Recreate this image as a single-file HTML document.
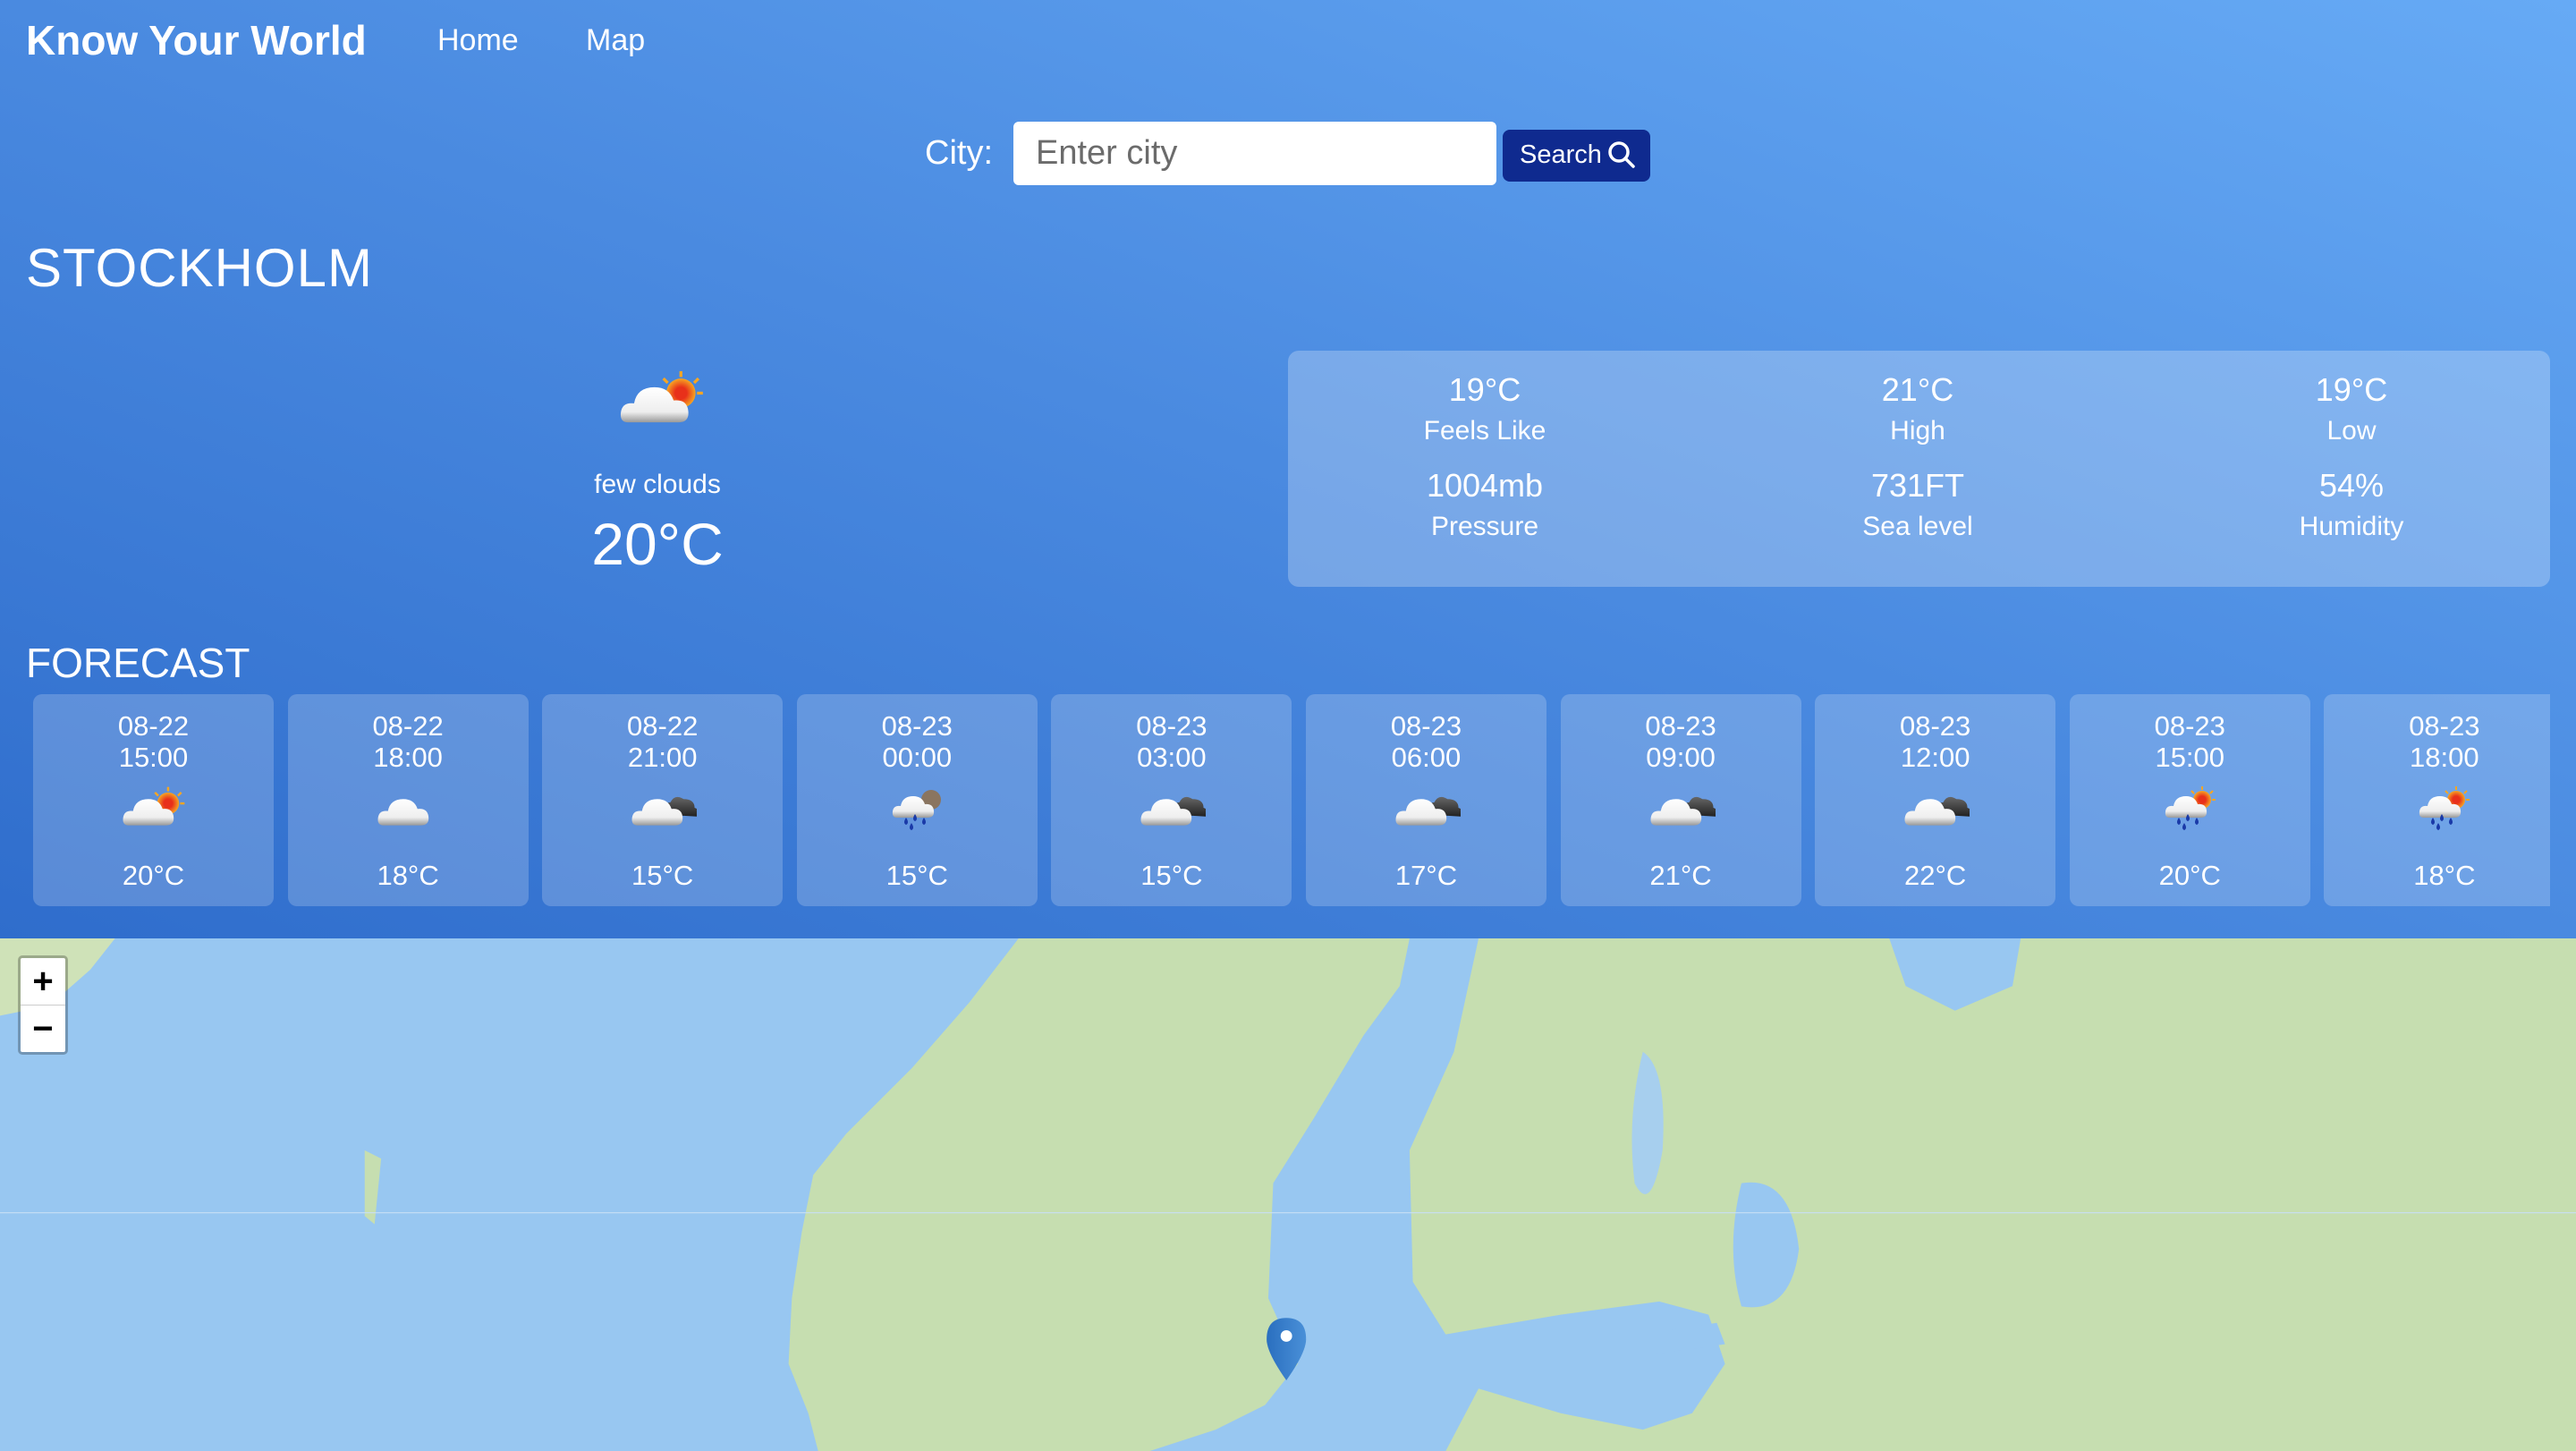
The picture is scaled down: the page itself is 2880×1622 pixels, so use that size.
<!DOCTYPE html>
<html><head><meta charset="utf-8"><style>
*{margin:0;padding:0;box-sizing:border-box}
body{width:2880px;height:1622px;overflow:hidden;font-family:"Liberation Sans",sans-serif;color:#fff;position:relative;background:#98c7f1}
.hdr{position:absolute;left:0;top:0;width:2880px;height:1049px;background:linear-gradient(to top right,#2f6dcc 0%,#4a8ae0 50%,#66aaf5 100%)}
.a{position:absolute;white-space:nowrap;line-height:1}
.c{transform:translateX(-50%);text-align:center}
.stats{position:absolute;left:1440px;top:392px;width:1411px;height:264px;background:rgba(255,255,255,0.25);border-radius:12px}
.cards{position:absolute;left:37px;top:776px;width:2814px;height:237px;overflow:hidden;display:flex;gap:15.6px}
.card{flex:0 0 269px;height:237px;background:rgba(255,255,255,0.2);border-radius:10px;position:relative;text-align:center}
.card .d{position:absolute;left:0;right:0;top:18px;font-size:31px;line-height:35px}
.card svg{position:absolute;left:97px;top:100px}
.card .t{position:absolute;left:0;right:0;top:185px;font-size:31px}
</style></head><body>
<svg width="0" height="0" style="position:absolute">
<defs>
<linearGradient id="cg" x1="0" y1="0" x2="0" y2="1"><stop offset="0" stop-color="#fff"/><stop offset="0.7" stop-color="#eee"/><stop offset="1" stop-color="#999"/></linearGradient>
<radialGradient id="sg"><stop offset="0.4" stop-color="#e8301a"/><stop offset="1" stop-color="#f6a623"/></radialGradient>
<linearGradient id="dg" x1="0" y1="0" x2="0" y2="1"><stop offset="0" stop-color="#666"/><stop offset="1" stop-color="#222"/></linearGradient>
<linearGradient id="pg" x1="0" y1="0" x2="1" y2="0"><stop offset="0" stop-color="#2a6fbf"/><stop offset="1" stop-color="#4a90d8"/></linearGradient>
<g id="cloud"><path d="M8 38 Q2 38 3 31 Q4 24 12 25 Q14 14 26 14 Q36 14 39 23 Q48 22 49 30 Q50 38 42 38 Z" fill="url(#cg)"/></g>
<g id="sun"><circle cx="44" cy="18" r="10" fill="url(#sg)"/><g stroke="#f6a623" stroke-width="2"><line x1="44" y1="3" x2="44" y2="7"/><line x1="56" y1="8" x2="53" y2="11"/><line x1="59" y1="18" x2="55" y2="18"/><line x1="32" y1="8" x2="35" y2="11"/></g></g>
<g id="dark"><path d="M30 28 Q28 18 38 17 Q42 9 50 14 Q60 14 60 22 Q66 24 62 30 Z" fill="url(#dg)"/></g>
<g id="moon"><circle cx="46" cy="18" r="11" fill="#8a7560"/></g>
<g id="rain" fill="#1a3aa8"><path d="M18 38 q-4 6 0 8 q4-2 0-8z"/><path d="M28 34 q-4 6 0 8 q4-2 0-8z"/><path d="M38 38 q-4 6 0 8 q4-2 0-8z"/><path d="M24 44 q-4 6 0 8 q4-2 0-8z"/></g>
</defs></svg>

<div class="hdr"></div>
<div class="a" style="left:29px;top:22px;font-size:46px;font-weight:bold">Know Your World</div>
<div class="a" style="left:489px;top:28px;font-size:34px">Home</div>
<div class="a" style="left:655px;top:28px;font-size:34px">Map</div>

<div class="a" style="left:1034px;top:152px;font-size:38px">City:</div>
<div style="position:absolute;left:1133px;top:136px;width:540px;height:71px;background:#fff;border-radius:6px"></div>
<div class="a" style="left:1158px;top:152px;font-size:38px;color:#6b6b6b">Enter city</div>
<div style="position:absolute;left:1680px;top:145px;width:165px;height:58px;background:#0f2a8f;border-radius:8px"></div>
<div class="a" style="left:1699px;top:159px;font-size:29px">Search</div>
<svg style="position:absolute;left:1797px;top:157px" width="32" height="32" viewBox="0 0 32 32"><circle cx="13" cy="13" r="10" fill="none" stroke="#fff" stroke-width="3.5"/><line x1="20" y1="20" x2="29" y2="29" stroke="#fff" stroke-width="3.5" stroke-linecap="round"/></svg>

<div class="a" style="left:29px;top:270px;font-size:60px;letter-spacing:1px">STOCKHOLM</div>

<svg style="position:absolute;left:685px;top:410px" width="110" height="72" viewBox="0 0 62 44"><use href="#sun"/><use href="#cloud"/></svg>
<div class="a c" style="left:735px;top:527px;font-size:30px">few clouds</div>
<div class="a c" style="left:735px;top:575px;font-size:66px">20°C</div>

<div class="stats"></div>
<div class="a c" style="left:1660px;top:418px;font-size:36px">19°C</div>
<div class="a c" style="left:1660px;top:467px;font-size:30px">Feels Like</div>
<div class="a c" style="left:1660px;top:525px;font-size:36px">1004mb</div>
<div class="a c" style="left:1660px;top:574px;font-size:30px">Pressure</div>
<div class="a c" style="left:2144px;top:418px;font-size:36px">21°C</div>
<div class="a c" style="left:2144px;top:467px;font-size:30px">High</div>
<div class="a c" style="left:2144px;top:525px;font-size:36px">731FT</div>
<div class="a c" style="left:2144px;top:574px;font-size:30px">Sea level</div>
<div class="a c" style="left:2629px;top:418px;font-size:36px">19°C</div>
<div class="a c" style="left:2629px;top:467px;font-size:30px">Low</div>
<div class="a c" style="left:2629px;top:525px;font-size:36px">54%</div>
<div class="a c" style="left:2629px;top:574px;font-size:30px">Humidity</div>

<div class="a" style="left:29px;top:718px;font-size:46px">FORECAST</div>

<div class="cards">
<div class="card"><div class="d">08-22<br>15:00</div><svg width="76" height="54" viewBox="0 0 62 44"><use href="#sun"/><use href="#cloud"/></svg><div class="t">20°C</div></div>
<div class="card"><div class="d">08-22<br>18:00</div><svg width="76" height="54" viewBox="0 0 62 44"><use href="#cloud"/></svg><div class="t">18°C</div></div>
<div class="card"><div class="d">08-22<br>21:00</div><svg width="76" height="54" viewBox="0 0 62 44"><use href="#dark"/><use href="#cloud"/></svg><div class="t">15°C</div></div>
<div class="card"><div class="d">08-23<br>00:00</div><svg width="76" height="54" viewBox="0 0 62 54"><use href="#moon"/><use href="#cloud"/><use href="#rain"/></svg><div class="t">15°C</div></div>
<div class="card"><div class="d">08-23<br>03:00</div><svg width="76" height="54" viewBox="0 0 62 44"><use href="#dark"/><use href="#cloud"/></svg><div class="t">15°C</div></div>
<div class="card"><div class="d">08-23<br>06:00</div><svg width="76" height="54" viewBox="0 0 62 44"><use href="#dark"/><use href="#cloud"/></svg><div class="t">17°C</div></div>
<div class="card"><div class="d">08-23<br>09:00</div><svg width="76" height="54" viewBox="0 0 62 44"><use href="#dark"/><use href="#cloud"/></svg><div class="t">21°C</div></div>
<div class="card"><div class="d">08-23<br>12:00</div><svg width="76" height="54" viewBox="0 0 62 44"><use href="#dark"/><use href="#cloud"/></svg><div class="t">22°C</div></div>
<div class="card"><div class="d">08-23<br>15:00</div><svg width="76" height="54" viewBox="0 0 62 54"><use href="#sun"/><use href="#cloud"/><use href="#rain"/></svg><div class="t">20°C</div></div>
<div class="card"><div class="d">08-23<br>18:00</div><svg width="76" height="54" viewBox="0 0 62 54"><use href="#sun"/><use href="#cloud"/><use href="#rain"/></svg><div class="t">18°C</div></div>
</div>

<svg style="position:absolute;left:0;top:1049px" width="2880" height="573" viewBox="0 571 1568 312" preserveAspectRatio="none">
<rect x="0" y="571" width="1568" height="312" fill="#98c7f1"/>
<path d="M0 571 L70 571 L55 590 L30 612 L0 618 Z" fill="#cfe2b8"/>
<path d="M620 571 L590 610 L555 650 L515 690 L495 715 L488 750 L482 790 L480 830 L492 860 L498 883 L700 883 L740 870 L770 855 L790 830 L772 790 L775 720 L800 680 L830 630 L852 600 L858 571 Z" fill="#c6deb0"/>
<path d="M900 571 L885 640 L858 700 L860 780 L880 812 L950 800 L1010 792 L1040 800 L1050 830 L1030 860 L1000 870 L950 860 L900 845 L880 883 L1568 883 L1568 571 Z" fill="#c6deb0"/>
<path d="M1150 571 L1230 571 L1225 600 L1190 615 L1160 600 Z" fill="#98c7f1"/>
<path d="M1060 720 Q1090 715 1095 760 Q1090 800 1060 795 Q1050 760 1060 720 Z" fill="#98c7f1"/>
<path d="M1000 812 L1045 805 L1050 818 L1000 825 Z" fill="#98c7f1"/>
<path d="M1000 640 Q1015 650 1012 700 Q1005 740 995 720 Q990 680 1000 640Z" fill="#a7cfee"/>
<path d="M222 700 L232 705 L228 745 L222 740 Z" fill="#c6deb0"/>
<line x1="0" y1="738" x2="1568" y2="738" stroke="#c8dff5" stroke-width="0.6"/>
<path d="M783 802 Q771 802 771 815 Q771 823 783 840 Q795 823 795 815 Q795 802 783 802 Z" fill="url(#pg)"/>
<circle cx="783" cy="813" r="3.5" fill="#fff"/>
</svg>

<div style="position:absolute;left:20px;top:1068px;width:56px;height:111px;background:#fff;border:3px solid rgba(0,0,0,0.25);border-radius:5px;background-clip:padding-box"></div>
<div style="position:absolute;left:23px;top:1123px;width:50px;height:1px;background:#ccc"></div>
<div class="a c" style="left:48px;top:1077px;font-size:40px;color:#000;font-weight:bold">+</div>
<div class="a c" style="left:48px;top:1130px;font-size:40px;color:#000;font-weight:bold">−</div>
</body></html>
